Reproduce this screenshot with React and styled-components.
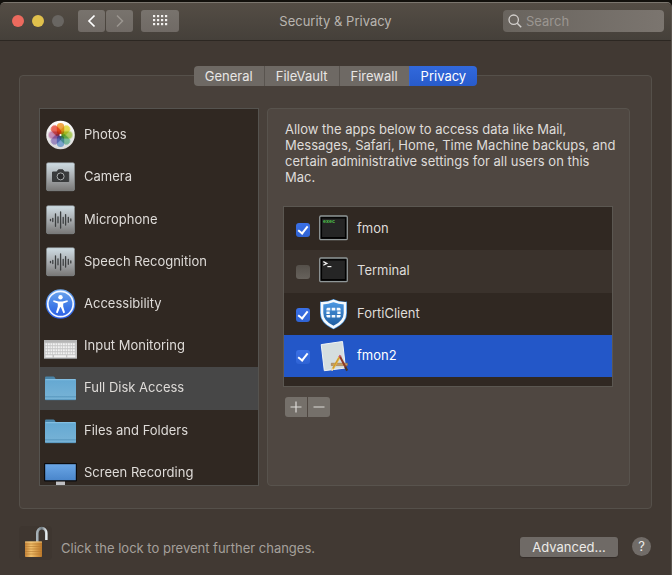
import React, { useState } from 'react';
import styled, { createGlobalStyle } from 'styled-components';

const tabs = ['General', 'FileVault', 'Firewall', 'Privacy'];

const PhotosIcon = () => (
  <svg width="33" height="32" viewBox="0 0 33 32" aria-hidden="true">
    <defs>
      <linearGradient id="photosBg" x1="0" y1="0" x2="0" y2="1">
        <stop offset="0" stopColor="#ffffff" />
        <stop offset="1" stopColor="#d9d9d9" />
      </linearGradient>
    </defs>
    <circle cx="16.5" cy="16" r="14.3" fill="url(#photosBg)" />
    {['#f7a136', '#ece23f', '#b2d657', '#7bcba4', '#7fb2e8', '#a78fd2', '#d18cbe', '#f15a4a'].map((color, index) => (
      <Petal
        key={color}
        x="12.8"
        y="4"
        width="7.4"
        height="11.5"
        rx="3.6"
        fill={color}
        transform={`rotate(${index * 45} 16.5 16)`}
      />
    ))}
    <circle cx="16.5" cy="16" r="1" fill="#fff" />
  </svg>
);

const Tile = ({ id, children }) => (
  <svg width="33" height="32" viewBox="0 0 33 32" aria-hidden="true">
    <defs>
      <linearGradient id={id} x1="0" y1="0" x2="0" y2="1">
        <stop offset="0" stopColor="#cfdde4" />
        <stop offset="0.5" stopColor="#a9adb0" />
        <stop offset="1" stopColor="#797877" />
      </linearGradient>
    </defs>
    <rect x="2.5" y="1.7" width="28" height="28" rx="1.5" fill={`url(#${id})`} stroke="#8b9296" strokeWidth="0.6" />
    {children}
  </svg>
);

const CameraIcon = () => (
  <Tile id="cameraBg">
    <path d="M8.5 11h4.3l1.6-2.2h4.4l1.6 2.2h4.3v9.5H8.5z" fill="#393b3c" stroke="#393b3c" strokeLinejoin="round" />
    <circle cx="16.6" cy="15.4" r="3.5" fill="#2a2b2c" stroke="#a9acad" strokeWidth="1" />
  </Tile>
);

const WaveIcon = ({ id }) => (
  <Tile id={id}>
    <path
      d="M6.5 15.3v1.4M8.8 14.3v3.2M11.5 9.8v12.5M14 12.8v6M16.6 8v16M19.2 13.3v6M21.6 10.6v10.5M24.3 13.3v5M26.8 14.9v2"
      stroke="#3c3f40"
      strokeWidth="1.3"
      strokeLinecap="round"
    />
  </Tile>
);

const AccessibilityIcon = () => (
  <svg width="33" height="32" viewBox="0 0 33 32" aria-hidden="true">
    <defs>
      <linearGradient id="accessBg" x1="0" y1="0" x2="0" y2="1">
        <stop offset="0" stopColor="#6fa9ee" />
        <stop offset="0.6" stopColor="#3c77e6" />
        <stop offset="1" stopColor="#2a5be6" />
      </linearGradient>
    </defs>
    <circle cx="16.5" cy="16" r="14.8" fill="url(#accessBg)" />
    <circle cx="16.5" cy="16" r="12.7" fill="none" stroke="#f2f6ff" strokeWidth="1.7" />
    <circle cx="16.5" cy="9.3" r="2.2" fill="#fff" />
    <path d="M9.5 12.3l5 1.2h4l5-1.2.3 1.4-4.6 1.7v3.2l1.8 6-1.6.6-2.5-6h-.8l-2.5 6-1.6-.6 1.8-6v-3.2l-4.6-1.7z" fill="#fff" />
  </svg>
);

const KeyboardIcon = () => (
  <svg width="33" height="32" viewBox="0 0 33 32" aria-hidden="true">
    <rect x="0" y="10" width="33" height="18.5" fill="#c4c4c4" />
    <rect x="0" y="10" width="33" height="2.5" fill="#b5b5b5" />
    <path d="M1.5 14.2h30M1.5 17.2h30M1.5 20.2h30M1.5 23.2h30" stroke="#f1f1f1" strokeWidth="2" strokeDasharray="1.8 .7" />
    <path d="M1.5 26.3h7M10 26.3h12M23.3 26.3h8" stroke="#f1f1f1" strokeWidth="2" />
    <rect x="0" y="28" width="33" height="1" fill="#8e8e8e" />
  </svg>
);

const FolderIcon = ({ id }) => (
  <svg width="33" height="32" viewBox="0 0 33 32" aria-hidden="true">
    <defs>
      <linearGradient id={id} x1="0" y1="0" x2="0" y2="1">
        <stop offset="0" stopColor="#64a8d2" />
        <stop offset="1" stopColor="#78b3d6" />
      </linearGradient>
    </defs>
    <path d="M1 8V5.600q0-1.100 1.100-1.100h7.300q.8 0 1.400.9l1 1.900V12H1z" fill="#4984a8" />
    <rect x="1" y="7" width="31" height="21" rx="1" fill={`url(#${id})`} />
    <path d="M1.5 7.700h30" stroke="#8dc7e8" strokeWidth="0.9" />
    <path d="M1 24.800h31M1.500 27.700h30" stroke="#4f8fb8" strokeWidth="0.8" />
  </svg>
);

const MonitorIcon = () => (
  <svg width="33" height="32" viewBox="0 0 33 32" aria-hidden="true">
    <defs>
      <linearGradient id="monitorBg" x1="0" y1="0" x2="0" y2="1">
        <stop offset="0" stopColor="#6aa6e6" />
        <stop offset="1" stopColor="#4a86cb" />
      </linearGradient>
    </defs>
    <rect x="0" y="6" width="33" height="18.6" rx="1" fill="#0b0b0d" />
    <rect x="1.2" y="7.2" width="30.6" height="16" fill="url(#monitorBg)" />
    <path d="M12 24.6h9v4h-9z" fill="#bfbfc3" />
  </svg>
);

const privacyItems = [
  { label: 'Photos', icon: <PhotosIcon /> },
  { label: 'Camera', icon: <CameraIcon /> },
  { label: 'Microphone', icon: <WaveIcon id="microphoneBg" /> },
  { label: 'Speech Recognition', icon: <WaveIcon id="speechBg" /> },
  { label: 'Accessibility', icon: <AccessibilityIcon /> },
  { label: 'Input Monitoring', icon: <KeyboardIcon /> },
  { label: 'Full Disk Access', icon: <FolderIcon id="diskBg" /> },
  { label: 'Files and Folders', icon: <FolderIcon id="filesBg" /> },
  { label: 'Screen Recording', icon: <MonitorIcon /> },
];

const ConsoleIcon = ({ children }) => (
  <svg width="30" height="32" viewBox="0 0 30 32" aria-hidden="true">
    <rect x="0.7" y="3" width="27.6" height="23.6" rx="1.2" fill="#0a0a0a" stroke="#8f9697" strokeWidth="1.3" />
    <rect x="2.6" y="5" width="23.8" height="19.6" fill="#252525" stroke="#000" strokeWidth="1" />
    {children}
  </svg>
);

const ExecIcon = () => (
  <ConsoleIcon>
    <text x="4" y="9.6" fill="#4fc64c" fontFamily="Liberation Mono, monospace" fontWeight="bold" fontSize="5">exec</text>
  </ConsoleIcon>
);

const TerminalIcon = () => (
  <ConsoleIcon>
    <path d="M4.3 6.6l3.6 1.8-3.6 1.8" fill="none" stroke="#f1f1f1" strokeWidth="1.2" />
    <path d="M8.4 11.6h4" stroke="#f1f1f1" strokeWidth="1.2" />
  </ConsoleIcon>
);

const ShieldIcon = () => (
  <svg width="30" height="32" viewBox="0 0 30 32" aria-hidden="true">
    <defs>
      <linearGradient id="shieldBg" x1="0" y1="0" x2="0" y2="1">
        <stop offset="0" stopColor="#4c9ae6" />
        <stop offset="1" stopColor="#1d5a9d" />
      </linearGradient>
    </defs>
    <path d="M1 3.6Q8.5 4 14.5 1 20.5 4 28 3.6V15q0 10.500-13.500 16.300Q1 25.500 1 15z" fill="#3f8ad4" />
    <path d="M3 5.2Q9 5.3 14.5 2.9 20 5.3 26 5.2V15q0 9-11.5 14.2Q3 24 3 15z" fill="url(#shieldBg)" stroke="#f5f9fd" strokeWidth="2.6" />
    <path
      d="M8.400 9.800h2.900v2.600H7.400v-1.600zM12.700 9.800h3.600v2.600h-3.600zM17.700 9.800h2.900l1 1v1.600h-3.900zM7.400 13.400h3.300v2.600H7.400zM18.300 13.400h3.300v2.600h-3.300zM7.400 17h3.900v2.600H8.400l-1-1zM12.700 17h3.600v2.600h-3.600zM17.700 17h3.900v1.600l-1 1h-2.900z"
      fill="#f5f9fd"
    />
  </svg>
);

const AppIcon = () => (
  <svg width="30" height="32" viewBox="0 0 30 32" aria-hidden="true">
    <path d="M2.2 4.6L23.500 1.500 26.500 28 5.300 30.700z" fill="#d5dedf" stroke="#f0f4f4" strokeWidth="1" />
    <path d="M12.300 23.200h16.200v2.400H12.300z" fill="#c39b63" stroke="#8f6b3b" strokeWidth="0.5" />
    <path d="M20.800 16.500l-7.200 12.700" stroke="#e9b53a" strokeWidth="2.2" />
    <path d="M19.600 18.200l-7 12.300" stroke="#9a7430" strokeWidth="0.5" />
    <path d="M13.900 28.600l-1 2.200" stroke="#f4dfb6" strokeWidth="1.5" />
    <path d="M21.600 15.300l-1.200 2" stroke="#c5566b" strokeWidth="2.3" />
    <path d="M21.200 17l5.800 11" stroke="#8d3927" strokeWidth="2" />
    <path d="M26.200 27l2 3.600" stroke="#4a3428" strokeWidth="2.2" />
  </svg>
);

const initialApps = [
  { name: 'fmon', icon: <ExecIcon />, allowed: true },
  { name: 'Terminal', icon: <TerminalIcon />, allowed: false },
  { name: 'FortiClient', icon: <ShieldIcon />, allowed: true },
  { name: 'fmon2', icon: <AppIcon />, allowed: true },
];

const LockIcon = () => (
  <svg width="33" height="34" viewBox="0 0 33 34" aria-hidden="true">
    <defs>
      <linearGradient id="lockBody" x1="0" y1="0" x2="1" y2="0">
        <stop offset="0" stopColor="#c5843a" />
        <stop offset="0.35" stopColor="#f0bf6b" />
        <stop offset="1" stopColor="#bd7828" />
      </linearGradient>
      <linearGradient id="lockShackle" x1="0" y1="0" x2="1" y2="0">
        <stop offset="0" stopColor="#a8b3b9" />
        <stop offset="0.5" stopColor="#6d7980" />
        <stop offset="1" stopColor="#e7edf0" />
      </linearGradient>
    </defs>
    <rect width="33" height="34" rx="4" fill="#3e3630" />
    <path d="M18.300 16V7.300a4.500 5.200 0 0 1 9 0V14" fill="none" stroke="url(#lockShackle)" strokeWidth="2.6" />
    <rect x="6" y="15.5" width="17" height="15.5" rx="0.8" fill="url(#lockBody)" />
    <path d="M6 18h17M6 20.500h17M6 23h17M6 25.500h17M6 28h17" stroke="#b67a30" strokeWidth="0.6" />
    <path d="M6 16h17" stroke="#f5d08a" strokeWidth="0.8" />
  </svg>
);

const App = () => {
  const [activeTab, setActiveTab] = useState('Privacy');
  const [activeItem, setActiveItem] = useState('Full Disk Access');
  const [activeApp, setActiveApp] = useState('fmon2');
  const [apps, setApps] = useState(initialApps);

  const toggleApp = (name) =>
    setApps(apps.map((app) => (app.name === name ? { ...app, allowed: !app.allowed } : app)));

  return (
    <Window>
      <GlobalStyle />
      <TitleBar>
        <TitleSide>
          <Light $color="#ec6a5e" aria-label="Close" />
          <Light $color="#e0c04c" aria-label="Minimize" />
          <Light $color="#696662" aria-label="Zoom" />
          <NavButtons>
            <ToolButton aria-label="Back">
              <svg width="10" height="14" viewBox="0 0 10 14">
                <path d="M7.5 1.5L2 7l5.5 5.5" fill="none" stroke="#fff" strokeWidth="1.7" />
              </svg>
            </ToolButton>
            <ToolButton aria-label="Forward">
              <svg width="10" height="14" viewBox="0 0 10 14">
                <path d="M2 1.5L7.5 7 2 12.5" fill="none" stroke="#9b9690" strokeWidth="1.5" />
              </svg>
            </ToolButton>
          </NavButtons>
          <ToolButton $wide aria-label="Show All">
            <svg width="15" height="11" viewBox="0 0 15 11">
              {[0, 4, 8].map((y) =>
                [0, 4, 8, 12].map((x) => <rect key={`${x}-${y}`} x={x} y={y} width="2.2" height="2.2" fill="#f3f1ef" />)
              )}
            </svg>
          </ToolButton>
        </TitleSide>
        <Title>Security &amp; Privacy</Title>
        <TitleSide $end>
          <SearchField>
            <svg width="14" height="14" viewBox="0 0 14 14" aria-hidden="true">
              <circle cx="5.7" cy="5.7" r="4.7" fill="none" stroke="#d2cfcc" strokeWidth="1.3" />
              <path d="M9.2 9.2l4 4" stroke="#d2cfcc" strokeWidth="1.5" />
            </svg>
            <SearchInput type="search" placeholder="Search" aria-label="Search" />
          </SearchField>
        </TitleSide>
      </TitleBar>

      <Content>
        <TabBar role="tablist">
          {tabs.map((tab) => (
            <Tab key={tab} role="tab" aria-selected={tab === activeTab} $active={tab === activeTab} onClick={() => setActiveTab(tab)}>
              {tab}
            </Tab>
          ))}
        </TabBar>

        <Panel>
          <Sidebar>
            <SidebarList>
              {privacyItems.map((item) => (
                <SidebarRow key={item.label}>
                  <SidebarButton $active={item.label === activeItem} onClick={() => setActiveItem(item.label)}>
                    {item.icon}
                    <RowLabel>{item.label}</RowLabel>
                  </SidebarButton>
                </SidebarRow>
              ))}
            </SidebarList>
          </Sidebar>

          <Detail>
            <Description>
              Allow the apps below to access data like Mail, Messages, Safari, Home, Time Machine backups, and
              certain administrative settings for all users on this Mac.
            </Description>
            <AppList>
              {apps.map((app) => (
                <AppRow key={app.name} $active={app.name === activeApp} onClick={() => setActiveApp(app.name)}>
                  <AppLabel>
                    <Checkbox type="checkbox" checked={app.allowed} onChange={() => toggleApp(app.name)} />
                    {app.icon}
                    <RowLabel>{app.name}</RowLabel>
                  </AppLabel>
                </AppRow>
              ))}
            </AppList>
            <ListButtons>
              <ListButton aria-label="Add">
                <svg width="12" height="12" viewBox="0 0 12 12">
                  <path d="M6 .5v11M.5 6h11" stroke="#dedbd8" strokeWidth="1.2" />
                </svg>
              </ListButton>
              <ListButton aria-label="Remove">
                <svg width="12" height="12" viewBox="0 0 12 12">
                  <path d="M.5 6h11" stroke="#dedbd8" strokeWidth="1.2" />
                </svg>
              </ListButton>
            </ListButtons>
          </Detail>
        </Panel>
      </Content>

      <Footer>
        <LockButton aria-label="Lock">
          <LockIcon />
        </LockButton>
        <FooterText>Click the lock to prevent further changes.</FooterText>
        <AdvancedButton>Advanced...</AdvancedButton>
        <HelpButton aria-label="Help">?</HelpButton>
      </Footer>
    </Window>
  );
};

export default App;

const GlobalStyle = createGlobalStyle`
  * {
    box-sizing: border-box;
  }

  body {
    margin: 0;
    background: #12100c;
    font-family: Inter, "Liberation Sans", sans-serif;
    font-size: 13px;
    line-height: 16px;
    color: #dfdcd9;
  }

  button, input {
    margin: 0;
    padding: 0;
    border: 0;
    font: inherit;
    color: inherit;
  }

  svg {
    display: block;
    flex: none;
  }
`;

const Petal = styled.rect`
  opacity: 0.9;
  mix-blend-mode: multiply;
`;

const Window = styled.main`
  display: flex;
  flex-direction: column;
  min-height: calc(100vh - 2px);
  margin-top: 2px;
  background: #413933;
  border-top: 1px solid #7b766e;
  border-right: 1px solid #5b554f;
  border-radius: 5px 5px 0 0;
`;

const TitleBar = styled.header`
  display: grid;
  grid-template-columns: 1fr auto 1fr;
  align-items: center;
  height: 38px;
  padding: 0 7px 2px;
  background: linear-gradient(#544d45, #45403a);
  border-bottom: 1px solid #2c2722;
  border-radius: 5px 5px 0 0;
`;

const TitleSide = styled.div`
  display: flex;
  align-items: center;
  justify-content: ${({ $end }) => ($end ? 'flex-end' : 'flex-start')};
  gap: 8px;
  padding-left: 5px;
`;

const Title = styled.h1`
  margin: 0;
  font-size: 13px;
  font-weight: 400;
  color: #b9b5b0;
`;

const Light = styled.button`
  width: 12px;
  height: 12px;
  border-radius: 50%;
  background: ${({ $color }) => $color};
`;

const NavButtons = styled.div`
  display: flex;
  gap: 1px;
  margin-left: 6px;
`;

const ToolButton = styled.button`
  display: flex;
  align-items: center;
  justify-content: center;
  width: ${({ $wide }) => ($wide ? '38px' : '27px')};
  height: 22px;
  border-radius: 3px;
  background: linear-gradient(#78736d, #706a65);
`;

const SearchField = styled.label`
  display: flex;
  align-items: center;
  gap: 4px;
  width: 161px;
  height: 22px;
  padding: 0 5px;
  border-radius: 4px;
  background: linear-gradient(90deg, #69645e, #7b756f);
`;

const SearchInput = styled.input`
  flex: 1;
  min-width: 0;
  background: transparent;
  outline: none;

  &::placeholder {
    color: #9b9691;
    opacity: 1;
  }
`;

const Content = styled.section`
  display: flex;
  flex-direction: column;
  padding: 25px 19px 0;
`;

const TabBar = styled.div`
  display: flex;
  align-self: center;
  z-index: 1;
  margin-bottom: -11px;
  border-radius: 4px;
  overflow: hidden;
`;

const Tab = styled.button`
  height: 20px;
  padding: 0 11px;
  background: ${({ $active }) => ($active ? 'linear-gradient(#3269dc, #285bcb)' : '#6e6964')};
  color: ${({ $active }) => ($active ? '#ffffff' : '#e8e6e4')};

  &:not(:first-child) {
    border-left: 1px solid ${({ $active }) => ($active ? '#3165d5' : '#59544f')};
  }
`;

const Panel = styled.div`
  display: grid;
  grid-template-columns: 220px 1fr;
  gap: 8px;
  padding: 32px 21px 22px 19px;
  background: #48403a;
  border: 1px solid #55504a;
  border-radius: 4px;
`;

const Sidebar = styled.nav`
  height: 378px;
  padding-top: 5px;
  overflow-y: auto;
  scrollbar-width: none;
  background: #302822;
  border: 1px solid #55534f;
`;

const SidebarList = styled.ul`
  display: grid;
  grid-template-rows: repeat(9, 1fr);
  height: 380px;
  margin: 0;
  padding: 0;
  list-style: none;
`;

const SidebarRow = styled.li`
  display: flex;
`;

const SidebarButton = styled.button`
  display: flex;
  flex: 1;
  align-items: center;
  gap: 7px;
  padding-left: 4px;
  text-align: left;
  background: ${({ $active }) => ($active ? '#474747' : 'transparent')};
`;

const RowLabel = styled.span`
  padding-bottom: 2px;
`;

const Detail = styled.section`
  padding: 12px 16px 13px 15px;
  background: #4f4741;
  border: 1px solid #58534d;
  border-radius: 4px;
`;

const Description = styled.p`
  margin: 0 -6px 21px 2px;
`;

const AppList = styled.ul`
  display: grid;
  grid-template-rows: repeat(4, 1fr);
  height: 181px;
  margin: 0;
  padding: 1px 0 9px;
  list-style: none;
  background: #302822;
  border: 1px solid #5b5751;
`;

const AppRow = styled.li`
  background: ${({ $active }) => ($active ? '#2357c8' : 'transparent')};
  color: ${({ $active }) => ($active ? '#ffffff' : 'inherit')};

  &:nth-child(even) {
    background: ${({ $active }) => ($active ? '#2357c8' : '#3a322c')};
  }
`;

const AppLabel = styled.label`
  display: flex;
  align-items: center;
  gap: 8px;
  height: 100%;
  padding-left: 12px;
`;

const Checkbox = styled.input`
  appearance: none;
  display: flex;
  align-items: center;
  justify-content: center;
  width: 14px;
  height: 14px;
  margin: 2px 1px 0 0;
  border-radius: 3px;
  background: linear-gradient(#55504a, #67625c);

  &:checked {
    background: linear-gradient(#3a70e6, #2f63d4);
  }

  &:checked::before {
    content: '';
    box-sizing: border-box;
    width: 6px;
    height: 10px;
    margin-bottom: 2px;
    border: solid #ffffff;
    border-width: 0 2px 2px 0;
    transform: rotate(38deg);
  }
`;

const ListButtons = styled.div`
  display: flex;
  gap: 1px;
  width: max-content;
  margin: 10px 0 0 2px;
  border-radius: 3px;
  overflow: hidden;
`;

const ListButton = styled.button`
  display: flex;
  align-items: center;
  justify-content: center;
  width: 22px;
  height: 20px;
  background: #75706a;
`;

const Footer = styled.footer`
  display: flex;
  align-items: center;
  padding: 17px 20px 15px 19px;
`;

const LockButton = styled.button`
  background: transparent;
`;

const FooterText = styled.span`
  flex: 1;
  padding: 10px 0 0 9px;
  color: #a5a09b;
`;

const AdvancedButton = styled.button`
  width: 98px;
  height: 20px;
  margin-top: 8px;
  border-radius: 3px;
  background: #6f6a66;
  color: #eceae8;
  box-shadow: 0 1px 1px #332d28;
`;

const HelpButton = styled.button`
  width: 19px;
  height: 19px;
  margin: 6px 0 0 14px;
  border-radius: 50%;
  background: #716c68;
  color: #eceae8;
`;
